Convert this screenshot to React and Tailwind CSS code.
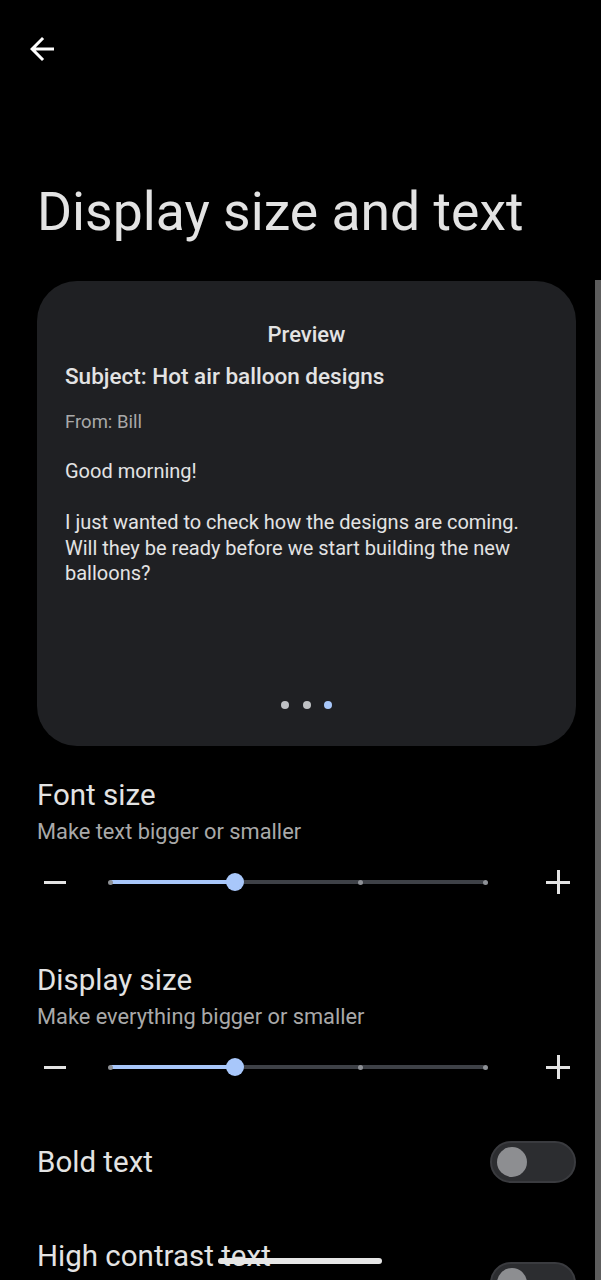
// Réglages d'affichage — taille de police et d'écran (dark)
const FONT = { fontFamily: 'Roboto, "Noto Sans", sans-serif' }

function BackArrow() {
  return (
    <svg width="36" height="36" viewBox="0 0 24 24" fill="#ffffff">
      <path d="M20 11H7.83l5.59-5.59L12 4l-8 8 8 8 1.41-1.41L7.83 13H20v-2z" />
    </svg>
  )
}

function StepSlider() {
  return (
    <div className="flex items-center h-[40px] pl-[44px]">
      <div className="w-[22px] h-[3px] bg-[#e3e3e3]" />
      <div className="relative ml-[44px] w-[375px] h-[4px] rounded-full bg-[#3e4147]">
        <div className="absolute left-0 top-0 h-[4px] w-[125px] rounded-full bg-[#a8c7fa]" />
        <span className="absolute left-[-2px] top-[-0.5px] w-[5px] h-[5px] rounded-full bg-[#8e9196]" />
        <span className="absolute left-[248px] top-[-0.5px] w-[5px] h-[5px] rounded-full bg-[#8e9196]" />
        <span className="absolute left-[373px] top-[-0.5px] w-[5px] h-[5px] rounded-full bg-[#8e9196]" />
        <span className="absolute left-[116px] top-[-7px] w-[18px] h-[18px] rounded-full bg-[#a8c7fa]" />
      </div>
      <div className="relative ml-[61px] w-[24px] h-[24px]">
        <div className="absolute left-0 top-[10.5px] w-[24px] h-[3px] bg-[#e3e3e3]" />
        <div className="absolute left-[10.5px] top-0 w-[3px] h-[24px] bg-[#e3e3e3]" />
      </div>
    </div>
  )
}

function Toggle() {
  return (
    <div className="flex items-center w-[86px] h-[42px] rounded-full bg-[#2c2d30] border-2 border-[#3a3b3f] pl-[5px]">
      <div className="w-[30px] h-[30px] rounded-full bg-[#8d8e91]" />
    </div>
  )
}

function SizeSection({ title, subtitle }) {
  return (
    <div>
      <h2 className="px-[37px] text-[29.5px] leading-[34px] text-[#e3e3e3]">{title}</h2>
      <p className="mt-[7px] px-[37px] text-[21.8px] leading-[26px] text-[#a9a9a9]">{subtitle}</p>
      <div className="mt-[17px]">
        <StepSlider />
      </div>
    </div>
  )
}

export default function App() {
  return (
    <div className="relative w-[601px] h-[1280px] overflow-hidden bg-black" style={FONT}>
      <div className="h-[98px] pl-[24px] pt-[31px]">
        <BackArrow />
      </div>

      <h1 className="mt-[85px] px-[37px] text-[53.5px] leading-[58px] text-[#e3e3e3]">
        Display size and text
      </h1>

      {/* Carte d'aperçu */}
      <div className="mt-[40px] ml-[37px] mr-[25px] h-[465px] rounded-[40px] bg-[#1f2023] flex flex-col pt-[42px] px-[28px] pb-[37px]">
        <p className="text-center text-[22px] leading-[24px] font-medium text-[#e3e3e3]">Preview</p>
        <p className="mt-[17px] text-[22.5px] leading-[24px] font-medium text-[#e3e3e3]">
          Subject: Hot air balloon designs
        </p>
        <p className="mt-[22px] text-[18.5px] leading-[24px] text-[#a9a9a9]">From: Bill</p>
        <p className="mt-[25px] text-[20px] leading-[25px] text-[#e3e3e3]">Good morning!</p>
        <p className="mt-[26px] text-[20px] leading-[25.5px] text-[#e3e3e3]">
          I just wanted to check how the designs are coming. Will they be ready before we start building the new balloons?
        </p>
        <div className="flex-1" />
        <div className="flex justify-center gap-[13.5px]">
          <span className="w-[8px] h-[8px] rounded-full bg-[#bfc1c4]" />
          <span className="w-[8px] h-[8px] rounded-full bg-[#bfc1c4]" />
          <span className="w-[8px] h-[8px] rounded-full bg-[#a8c7fa]" />
        </div>
      </div>

      <div className="mt-[32px]">
        <SizeSection title="Font size" subtitle="Make text bigger or smaller" />
      </div>
      <div className="mt-[61px]">
        <SizeSection title="Display size" subtitle="Make everything bigger or smaller" />
      </div>

      <div className="mt-[54px] flex items-center justify-between pl-[37px] pr-[25px] h-[42px]">
        <span className="text-[29.5px] leading-[34px] text-[#e3e3e3]">Bold text</span>
        <Toggle />
      </div>

      <div className="mt-[56px] flex items-start justify-between pl-[37px] pr-[25px]">
        <span className="text-[29.5px] leading-[34px] text-[#e3e3e3]">High contrast text</span>
        <div className="mt-[23px]">
          <Toggle />
        </div>
      </div>

      {/* barre de défilement */}
      <div className="absolute right-0 top-[280px] bottom-0 w-[6px] bg-[#5d5d5d]" />
      {/* indicateur de navigation */}
      <div className="absolute left-[218px] top-[1258px] w-[164px] h-[6px] rounded-full bg-[#e6e6e6]" />
    </div>
  )
}
